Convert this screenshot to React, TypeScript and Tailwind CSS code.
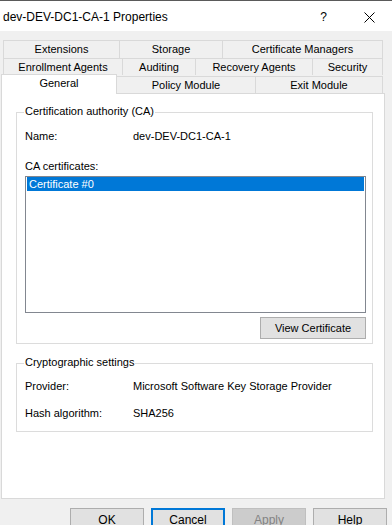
import React from 'react';

const font = { fontFamily: '"Liberation Sans", Arial, sans-serif' };

const Tab = ({ label, w, first = false, className = '' }: { label: string; w: number; first?: boolean; className?: string }) => (
  <div
    className={`flex items-center justify-center border border-b-0 border-[#d9d9d9] bg-[#f0f0f0] text-[11px] leading-[13px] text-black ${first ? '' : '-ml-px'} ${className}`}
    style={{ width: w }}
  >
    {label}
  </div>
);

const Row = ({ label, value }: { label: string; value: string }) => (
  <div className="flex text-[11px] leading-[13px] text-black">
    <span className="w-[108px] shrink-0">{label}</span>
    <span>{value}</span>
  </div>
);

const Btn = ({ label, variant = 'normal' }: { label: string; variant?: 'normal' | 'default' | 'disabled' }) => {
  const cls =
    variant === 'default'
      ? 'border-2 border-[#0078d7] bg-[#e1e1e1] text-black'
      : variant === 'disabled'
      ? 'border border-[#bfbfbf] bg-[#cccccc] text-[#838383]'
      : 'border border-[#adadad] bg-[#e1e1e1] text-black';
  return (
    <div className={`flex h-[23px] w-[74px] shrink-0 items-center justify-center text-[12px] ${cls}`}>{label}</div>
  );
};

export default function App() {
  return (
    <div className="flex h-[525px] w-[392px] flex-col overflow-hidden bg-[#f0f0f0]" style={font}>
      {/* title bar */}
      <div className="flex h-[31px] shrink-0 items-center border-t border-[#5a5a5a] bg-white pl-[3px] pt-[2px]">
        <span className="text-[12px] text-black">dev-DEV-DC1-CA-1 Properties</span>
        <span className="ml-auto mr-[37px] text-[12px] text-black">?</span>
        <svg width="11" height="11" viewBox="0 0 11 11" className="mr-[17px]">
          <path d="M0.5 0.5L10.5 10.5M10.5 0.5L0.5 10.5" stroke="#000" strokeWidth="1" />
        </svg>
      </div>

      {/* tabs */}
      <div className="mt-[9px] flex flex-col">
        <div className="ml-[3px] flex h-[18px]">
          <Tab label="Extensions" w={117} first />
          <Tab label="Storage" w={104} />
          <Tab label="Certificate Managers" w={161} />
        </div>
        <div className="ml-[3px] flex h-[17px]">
          <Tab label="Enrollment Agents" w={120} first />
          <Tab label="Auditing" w={74} />
          <Tab label="Recovery Agents" w={118} />
          <Tab label="Security" w={71} />
        </div>
        <div className="ml-[1px] flex h-[18px] items-end">
          <div className="relative z-10 -mb-px flex h-[20px] w-[116px] items-center justify-center border border-b-0 border-[#d9d9d9] bg-white pb-[2px] text-[11px] text-black">
            General
          </div>
          <Tab label="Policy Module" w={140} className="h-[17px]" />
          <Tab label="Exit Module" w={128} className="h-[17px]" />
        </div>
      </div>

      {/* panel */}
      <div className="ml-[1px] flex h-[406px] w-[384px] shrink-0 flex-col border border-[#d9d9d9] bg-white">
        {/* group 1 */}
        <div className="relative ml-[14px] mt-[18px] flex h-[232px] w-[357px] flex-col border border-[#dcdcdc] pl-[8px] pr-[6px] pt-[17px]">
          <span className="absolute left-[7px] top-[-8px] bg-white px-[1px] text-[11px] leading-[13px] text-black">
            Certification authority (CA)
          </span>
          <Row label="Name:" value="dev-DEV-DC1-CA-1" />
          <div className="mt-[17px] text-[11px] leading-[13px] text-black">CA certificates:</div>
          <div className="mt-[3px] h-[137px] border border-[#828790] bg-white px-[1px]">
            <div className="flex h-[14px] items-center bg-[#0078d7] pl-[2px] text-[11px] text-white">Certificate #0</div>
          </div>
          <div className="mt-[4px] flex justify-end">
            <div className="flex h-[22px] w-[106px] items-center justify-center border border-[#adadad] bg-[#e1e1e1] text-[11px] text-black">
              View Certificate
            </div>
          </div>
        </div>

        {/* group 2 */}
        <div className="relative ml-[14px] mt-[19px] flex h-[69px] w-[357px] flex-col gap-[14px] border border-[#dcdcdc] pl-[8px] pt-[16px]">
          <span className="absolute left-[7px] top-[-8px] bg-white px-[1px] text-[11px] leading-[13px] text-black">
            Cryptographic settings
          </span>
          <Row label="Provider:" value="Microsoft Software Key Storage Provider" />
          <Row label="Hash algorithm:" value="SHA256" />
        </div>
      </div>

      {/* buttons */}
      <div className="mt-[9px] flex justify-end gap-[7px] pr-[5px]">
        <Btn label="OK" />
        <Btn label="Cancel" variant="default" />
        <Btn label="Apply" variant="disabled" />
        <Btn label="Help" />
      </div>
    </div>
  );
}
